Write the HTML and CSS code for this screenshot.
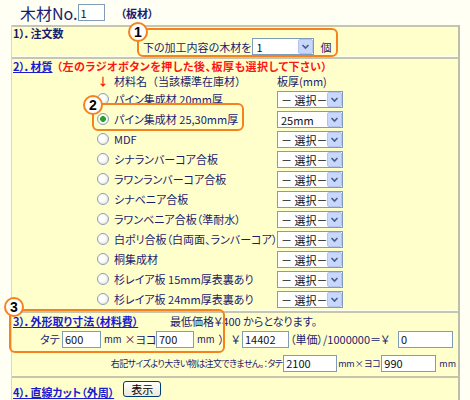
FILE: index.html
```html
<!DOCTYPE html>
<html lang="ja">
<head>
<meta charset="utf-8">
<link rel="stylesheet" href="styles.css">
</head>
<body>
<div class="title">
  <span class="ttl">木材No.</span>
  <input class="tx tno" value="1">
  <span class="kind">（板材）</span>
</div>
<div class="panel">
  <section class="sec s1">
    <div class="h">1）．注文数</div>
    <div class="qty">
      <span>下の加工内容の木材を</span>
      <span class="sel w62"><select><option>1</option></select><svg viewBox="0 0 15 15"><rect x="0.5" y="0.5" width="14" height="14" rx="1.5"/><path d="M4.5 6 L7.5 9 L10.5 6"/></svg></span>
      <span class="ko">個</span>
    </div>
  </section>

  <section class="sec s2">
    <div class="h"><a class="link" href="#">2）．材質</a><span class="warn">（左のラジオボタンを押した後、板厚も選択して下さい）</span></div>
    <div class="row sub"><span class="arrow">↓</span><span class="lb nopalt">材料名（当該標準在庫材）</span><span>板厚(mm)</span></div>
    <div class="row"><input type="radio" name="m" class="rd"><span class="lb">パイン集成材 20mm厚</span><span class="sel"><select><option>－ 選択－</option></select><svg viewBox="0 0 15 15"><rect x="0.5" y="0.5" width="14" height="14" rx="1.5"/><path d="M4.5 6 L7.5 9 L10.5 6"/></svg></span></div>
    <div class="row"><input type="radio" name="m" class="rd" checked><span class="lb">パイン集成材 25,30mm厚</span><span class="sel"><select><option>25mm</option></select><svg viewBox="0 0 15 15"><rect x="0.5" y="0.5" width="14" height="14" rx="1.5"/><path d="M4.5 6 L7.5 9 L10.5 6"/></svg></span></div>
    <div class="row"><input type="radio" name="m" class="rd"><span class="lb">MDF</span><span class="sel"><select><option>－ 選択－</option></select><svg viewBox="0 0 15 15"><rect x="0.5" y="0.5" width="14" height="14" rx="1.5"/><path d="M4.5 6 L7.5 9 L10.5 6"/></svg></span></div>
    <div class="row"><input type="radio" name="m" class="rd"><span class="lb">シナランバーコア合板</span><span class="sel"><select><option>－ 選択－</option></select><svg viewBox="0 0 15 15"><rect x="0.5" y="0.5" width="14" height="14" rx="1.5"/><path d="M4.5 6 L7.5 9 L10.5 6"/></svg></span></div>
    <div class="row"><input type="radio" name="m" class="rd"><span class="lb">ラワンランバーコア合板</span><span class="sel"><select><option>－ 選択－</option></select><svg viewBox="0 0 15 15"><rect x="0.5" y="0.5" width="14" height="14" rx="1.5"/><path d="M4.5 6 L7.5 9 L10.5 6"/></svg></span></div>
    <div class="row"><input type="radio" name="m" class="rd"><span class="lb">シナベニア合板</span><span class="sel"><select><option>－ 選択－</option></select><svg viewBox="0 0 15 15"><rect x="0.5" y="0.5" width="14" height="14" rx="1.5"/><path d="M4.5 6 L7.5 9 L10.5 6"/></svg></span></div>
    <div class="row"><input type="radio" name="m" class="rd"><span class="lb">ラワンベニア合板（準耐水）</span><span class="sel"><select><option>－ 選択－</option></select><svg viewBox="0 0 15 15"><rect x="0.5" y="0.5" width="14" height="14" rx="1.5"/><path d="M4.5 6 L7.5 9 L10.5 6"/></svg></span></div>
    <div class="row"><input type="radio" name="m" class="rd"><span class="lb">白ポリ合板（白両面、ランバーコア）</span><span class="sel"><select><option>－ 選択－</option></select><svg viewBox="0 0 15 15"><rect x="0.5" y="0.5" width="14" height="14" rx="1.5"/><path d="M4.5 6 L7.5 9 L10.5 6"/></svg></span></div>
    <div class="row"><input type="radio" name="m" class="rd"><span class="lb">桐集成材</span><span class="sel"><select><option>－ 選択－</option></select><svg viewBox="0 0 15 15"><rect x="0.5" y="0.5" width="14" height="14" rx="1.5"/><path d="M4.5 6 L7.5 9 L10.5 6"/></svg></span></div>
    <div class="row"><input type="radio" name="m" class="rd"><span class="lb">杉レイア板 15mm厚表裏あり</span><span class="sel"><select><option>－ 選択－</option></select><svg viewBox="0 0 15 15"><rect x="0.5" y="0.5" width="14" height="14" rx="1.5"/><path d="M4.5 6 L7.5 9 L10.5 6"/></svg></span></div>
    <div class="row"><input type="radio" name="m" class="rd"><span class="lb">杉レイア板 24mm厚表裏あり</span><span class="sel"><select><option>－ 選択－</option></select><svg viewBox="0 0 15 15"><rect x="0.5" y="0.5" width="14" height="14" rx="1.5"/><path d="M4.5 6 L7.5 9 L10.5 6"/></svg></span></div>
  </section>

  <section class="sec s3">
    <div class="h"><span class="hl"><a class="link" href="#">3）．外形取り寸法（材料費）</a></span><span>最低価格￥400 からとなります。</span></div>
    <div class="r2">
      <span class="g g1">タテ</span>
      <input class="tx w39" value="600">
      <span class="g g2"><span class="mm">mm</span><span class="ml3">×ヨコ</span></span>
      <input class="tx w38" value="700">
      <span class="g g3"><span class="mm">mm</span><span class="ml4">）</span><span class="yen">￥</span></span>
      <input class="tx w47" value="14402">
      <span class="g g4">（単価）/1000000＝￥</span>
      <input class="tx w55" value="0">
    </div>
    <div class="r3">
      <span class="note">右記サイズより大きい物は注文できません。：タテ</span>
      <input class="tx w54" value="2100">
      <span class="g5">mm × ヨコ</span>
      <input class="tx w55" value="990">
      <span class="g6">mm</span>
    </div>
  </section>

  <section class="sec s4">
    <a class="link" href="#">4）．直線カット（外周）</a>
    <button class="btn">表示</button>
  </section>

  <div class="callout c1"><span class="num">1</span></div>
  <div class="callout c2"><span class="num">2</span></div>
  <div class="callout c3"><span class="num">3</span></div>
</div>
</body>
</html>
```

FILE: styles.css
```css
body {
  margin: 0;
  background: #fffff3;
  font-family: "Noto Sans CJK JP", "Noto Sans", sans-serif;
  font-size: 11px;
  color: #1b1b70;
  font-feature-settings: "palt";
}

.title {
  height: 25px;
  display: flex;
  align-items: center;
  padding-left: 20px;
}
.ttl { font-size: 16px; color: #1b1b70; }
.tno { width: 27px; height: 20px; margin-left: 5px; font-size: 12px; }
.kind { margin-left: 16px; font-weight: bold; font-size: 11px; }

.panel {
  position: relative;
  margin-left: 11px;
  width: 446px;
  border-left: 1px solid #d8d8c4;
  border-right: 2px solid #bebeaa;
  min-height: 380px;
}

.sec {
  background: #ffffcc;
  border-top: 2px solid #c6c6ac;
  margin-bottom: 1px;
}

.link { color: #1a1ad0; text-decoration: underline; font-weight: bold; }

/* section 1 */
.s1 { display: flex; height: 29px; }
.s1 .h { width: 130px; padding-left: 1px; line-height: 13px; font-weight: bold; }
.qty { margin-top: 11px; display: flex; align-items: center; height: 17px; }
.qty .sel { margin-left: 1px; }
.ko { margin-left: 6px; }

/* selects */
.sel { position: relative; display: inline-block; width: 66px; height: 17px; }
.sel.w62 { width: 62px; }
.sel select {
  appearance: none;
  -webkit-appearance: none;
  box-sizing: border-box;
  width: 100%;
  height: 100%;
  margin: 0;
  padding: 0 0 0 3px;
  border: 1px solid #7f9db9;
  border-radius: 0;
  background: #fff;
  font: inherit;
  font-size: 11px;
  color: #111;
}
.sel svg { position: absolute; right: 1px; top: 1px; width: 15px; height: 15px; }
.sel svg rect { fill: #c8d7fb; stroke: #b2c4ee; }
.sel svg path { fill: none; stroke: #4b5f8a; stroke-width: 1.7; }

/* section 2 */
.s2 { padding-bottom: 1px; }
.s2 .h { line-height: 14px; padding-left: 1px; white-space: nowrap; }
.warn { color: #ff1414; font-weight: bold; margin-left: 4px; letter-spacing: 0.5px; }
.row { display: flex; align-items: center; height: 20px; padding-left: 85px; white-space: nowrap; }
.row.sub { height: 16px; }
.nopalt { font-feature-settings: normal; }
.arrow { width: 12px; margin-right: 5px; color: #ff1414; text-align: center; font-weight: bold; }
.lb { width: 163px; }
.rd {
  appearance: none;
  -webkit-appearance: none;
  width: 12px;
  height: 12px;
  margin: 0 5px 0 0;
  border: 1px solid #8aa0b4;
  border-radius: 50%;
  background: radial-gradient(circle at 40% 40%, #ffffff 30%, #dcdcd4 100%);
  box-sizing: border-box;
}
.rd:checked {
  background: radial-gradient(circle, #27a127 0 2.6px, #ffffff 3.2px, #e4e4dc 100%);
}

/* inputs */
.tx {
  box-sizing: border-box;
  height: 17px;
  margin: 0;
  padding: 0 2px;
  border: 1px solid #7f9db9;
  background: #fff;
  font-family: inherit;
  font-size: 11px;
  color: #111;
  flex: none;
}
.w38 { width: 38px; }
.w39 { width: 39px; }
.w47 { width: 47px; }
.w54 { width: 54px; }
.w55 { width: 55px; }
.ml3 { margin-left: 3px; }
.ml4 { margin-left: 4px; }
.mm { font-size: 9.5px; }

/* section 3 */
.s3 { padding-bottom: 3px; }
.s3 .h { display: flex; line-height: 16px; padding-left: 1px; white-space: nowrap; }
.hl { width: 157px; }
.r2 { display: flex; align-items: center; height: 18px; margin-top: 1px; padding-left: 28px; white-space: nowrap; }
.g { display: flex; align-items: center; flex: none; box-sizing: border-box; white-space: nowrap; }
.g1 { width: 22px; }
.g2 { width: 55px; padding-left: 3px; }
.g3 { width: 48px; padding-left: 3px; }
.yen { margin-left: auto; padding-right: 2px; }
.g4 { width: 109px; padding-left: 1px; }
.r3 { display: flex; justify-content: flex-end; align-items: center; height: 18px; margin-top: 6px; padding-right: 2px; font-size: 9px; white-space: nowrap; }
.note { margin-right: 1px; letter-spacing: -0.6px; }
.g5 { margin: 0 1px; letter-spacing: -0.4px; word-spacing: -1px; }
.g6 { margin-left: 3px; }

/* section 4 */
.s4 { display: flex; align-items: flex-start; padding: 3px 0 0 1px; height: 30px; }
.s4 .link { margin-top: 4px; line-height: 14px; }
.btn {
  width: 38px;
  height: 16px;
  margin-left: 9px;
  padding: 0;
  border: 1px solid #003c74;
  border-radius: 3px;
  background: linear-gradient(#ffffff, #ece9d8);
  font-family: inherit;
  font-size: 11px;
  line-height: 14px;
  color: #000;
}

/* annotation callouts */
.callout {
  position: absolute;
  box-sizing: border-box;
  border: 2px solid #f5821f;
  border-radius: 6px;
}
.c1 { left: 125px; top: 3px; width: 201px; height: 29px; }
.c2 { left: 80px; top: 78px; width: 152px; height: 28px; }
.c3 { left: -3px; top: 284px; width: 216px; height: 44px; }
.num {
  position: absolute;
  box-sizing: border-box;
  width: 20px;
  height: 20px;
  border: 2px solid #f5821f;
  border-radius: 50%;
  background: #fff;
  color: #000;
  font-family: "Liberation Sans", sans-serif;
  font-weight: bold;
  font-size: 14px;
  line-height: 16px;
  text-align: center;
}
.c1 .num { left: -11px; top: -8px; }
.c2 .num { left: -11px; top: -10px; }
.c3 .num { left: -7px; top: -14px; }
```
